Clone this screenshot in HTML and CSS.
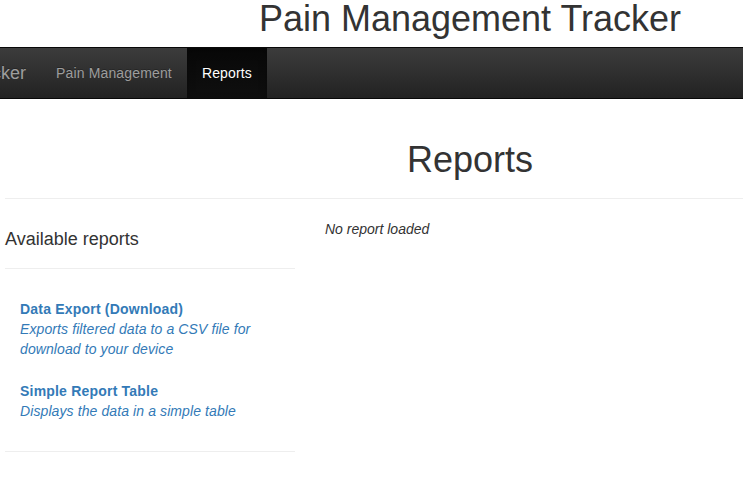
FILE: index.html
```html
<!DOCTYPE html>
<html lang="en">
<head>
<meta charset="utf-8">
<title>Reports - Pain Management Tracker</title>
<link rel="stylesheet" href="styles.css">
</head>
<body>
<div class="page">
  <h1 class="site-title">Pain Management Tracker</h1>
  <nav class="navbar">
    <div class="brand"><span>Pain Management Tracker</span></div>
    <ul class="nav">
      <li><a href="#">Pain Management</a></li>
      <li class="active"><a href="#">Reports</a></li>
    </ul>
  </nav>
  <div class="page-header">
    <h1>Reports</h1>
  </div>
  <div class="content">
    <aside class="sidebar">
      <h4 class="sidebar-title">Available reports</h4>
      <ul class="report-list">
        <li>
          <a href="#" class="report-name">Data Export (Download)</a>
          <em class="report-desc">Exports filtered data to a CSV file for download to your device</em>
        </li>
        <li>
          <a href="#" class="report-name">Simple Report Table</a>
          <em class="report-desc">Displays the data in a simple table</em>
        </li>
      </ul>
    </aside>
    <main class="report-area">
      <em>No report loaded</em>
    </main>
  </div>
</div>
</body>
</html>
```
FILE: styles.css
```css
html, body {
  margin: 0;
  padding: 0;
  overflow: hidden;
  background: #fff;
}
body {
  font-family: "Liberation Sans", Arial, Helvetica, sans-serif;
  font-size: 14px;
  line-height: 20px;
  color: #333;
}
a { text-decoration: none; }
.page {
  width: 743px;
}
.site-title {
  margin: 0;
  padding: 0 0 9px 197px;
  font-size: 36px;
  font-weight: 400;
  line-height: 38px;
  text-align: center;
  color: #333;
}
.navbar {
  display: flex;
  height: 50px;
  border-top: 1px solid #080808;
  border-bottom: 1px solid #080808;
  background: linear-gradient(to bottom, #3c3c3c 0, #222 100%);
}
.brand {
  width: 26px;
  padding-right: 15px;
  display: flex;
  justify-content: flex-end;
  overflow: hidden;
  white-space: nowrap;
}
.brand span {
  font-size: 18px;
  line-height: 50px;
  color: #9d9d9d;
  text-shadow: 0 -1px 0 rgba(0,0,0,.25);
}
.nav {
  display: flex;
  margin: 0;
  padding: 0;
  list-style: none;
}
.nav a {
  display: block;
  padding: 15px;
  line-height: 20px;
  letter-spacing: 0.15px;
  color: #9d9d9d;
  text-shadow: 0 -1px 0 rgba(0,0,0,.25);
}
.nav .active a {
  color: #fff;
  background: linear-gradient(to bottom, #080808 0, #0f0f0f 100%);
  box-shadow: inset 0 3px 9px rgba(0,0,0,.25);
}
.page-header {
  margin: 0 0 0 5px;
  padding: 41px 0 18px 192px;
  border-bottom: 1px solid #eee;
  text-align: center;
}
.page-header h1 {
  margin: 0;
  font-size: 36px;
  font-weight: 400;
  line-height: 40px;
}
.content {
  display: grid;
  grid-template-columns: 290px 1fr;
  column-gap: 30px;
  padding: 20px 0 0 5px;
}
.sidebar-title {
  margin: 0;
  padding: 10px 0 19px;
  font-size: 18px;
  font-weight: 400;
  line-height: 20px;
  border-bottom: 1px solid #eee;
}
.report-list {
  list-style: none;
  margin: 0;
  padding: 20px 0;
  border-bottom: 1px solid #eee;
  display: flex;
  flex-direction: column;
  gap: 2px;
}
.report-list li {
  padding: 10px 15px;
  display: flex;
  flex-direction: column;
  color: #337ab7;
}
.report-name {
  font-weight: 700;
  letter-spacing: 0.2px;
  color: #337ab7;
}
.report-desc {
  letter-spacing: 0.1px;
  color: #337ab7;
}
.report-area em {
  display: block;
}
```
